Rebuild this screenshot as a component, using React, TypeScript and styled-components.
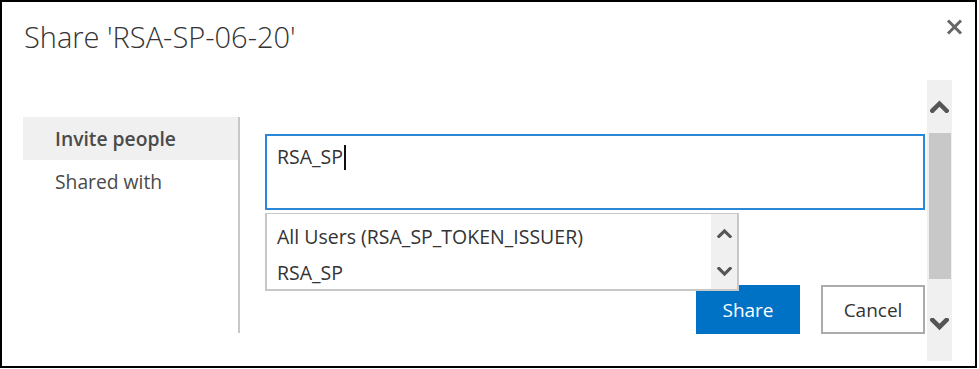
import React from 'react';
import styled, { createGlobalStyle } from 'styled-components';

const GlobalStyle = createGlobalStyle`
  html, body {
    margin: 0;
    padding: 0;
    background: #fff;
  }
  body {
    font-family: 'Open Sans', 'Noto Sans', sans-serif;
    color: #333;
  }
`;

const Chevron = ({ dir, size, stroke }: { dir: 'up' | 'down'; size: number; stroke: number }) => (
  <svg width={size} height={size * 0.66} viewBox="0 0 16 10.5" fill="none">
    <path
      d={dir === 'up' ? 'M2 9 L8 3 L14 9' : 'M2 1.5 L8 7.5 L14 1.5'}
      stroke="#555"
      strokeWidth={stroke}
      strokeLinecap="square"
    />
  </svg>
);

const CloseIcon = () => (
  <svg width="17" height="16" viewBox="0 0 17 16">
    <path d="M2 1.5 L15 14.5 M15 1.5 L2 14.5" stroke="#666" strokeWidth="3" />
  </svg>
);

const App = () => {
  return (
    <>
      <GlobalStyle />
      <Frame>
        <Header>
          <Title>Share 'RSA-SP-06-20'</Title>
          <CloseButton aria-label="Close">
            <CloseIcon />
          </CloseButton>
        </Header>
        <Body>
          <Content>
            <Nav>
              <NavItem active>Invite people</NavItem>
              <NavItem>Shared with</NavItem>
            </Nav>
            <Main>
              <PeopleBox>
                RSA_SP
                <Caret />
              </PeopleBox>
              <Suggestions>
                <SuggestionList>
                  <Suggestion>All Users (RSA_SP_TOKEN_ISSUER)</Suggestion>
                  <Suggestion>RSA_SP</Suggestion>
                </SuggestionList>
                <MiniScroll>
                  <Chevron dir="up" size={15} stroke={3.3} />
                  <Chevron dir="down" size={15} stroke={3.3} />
                </MiniScroll>
              </Suggestions>
              <Actions>
                <Button primary>Share</Button>
                <Button>Cancel</Button>
              </Actions>
            </Main>
          </Content>
          <Scrollbar>
            <ScrollArrow>
              <Chevron dir="up" size={19} stroke={3.8} />
            </ScrollArrow>
            <Thumb />
            <ScrollArrow>
              <Chevron dir="down" size={19} stroke={3.8} />
            </ScrollArrow>
          </Scrollbar>
        </Body>
      </Frame>
    </>
  );
};

export default App;

const Frame = styled.div`
  box-sizing: border-box;
  width: 977px;
  height: 368px;
  border: 2px solid #000;
  display: flex;
  flex-direction: column;
  background: #fff;
`;

const Header = styled.div`
  height: 78px;
  display: flex;
  justify-content: space-between;
  align-items: flex-start;
  padding: 0 12px 0 22px;
`;

const Title = styled.h1`
  margin: 16px 0 0;
  font-size: 29px;
  font-weight: 300;
  line-height: 38px;
  color: #333;
`;

const CloseButton = styled.button`
  margin-top: 17px;
  padding: 0;
  border: 0;
  background: none;
  display: flex;
`;

const Body = styled.div`
  flex: 1;
  display: flex;
  gap: 2px;
  padding-right: 23px;
  padding-bottom: 5px;
`;

const Content = styled.div`
  flex: 1;
  display: flex;
  padding: 37px 0 0 21px;
`;

const Nav = styled.div`
  width: 215px;
  height: 216px;
  border-right: 2px solid #c8c8c8;
`;

const NavItem = styled.div<{ active?: boolean }>`
  height: 43px;
  line-height: 43px;
  padding-left: 32px;
  font-size: 19.3px;
  font-weight: ${(p) => (p.active ? 600 : 400)};
  color: #4a4a4a;
  background: ${(p) => (p.active ? '#f0f0f0' : 'transparent')};
`;

const Main = styled.div`
  position: relative;
  flex: 1;
  padding: 17px 0 0 25px;
`;

const PeopleBox = styled.div`
  box-sizing: border-box;
  height: 76px;
  border: 2px solid #2b88d8;
  padding: 6px 10px;
  font-size: 19.5px;
  line-height: 30px;
  color: #333;
  display: flex;
  align-items: flex-start;
`;

const Caret = styled.span`
  display: inline-block;
  width: 1.5px;
  height: 25px;
  margin: 3px 0 0 1px;
  background: #111;
`;

const Suggestions = styled.div`
  position: absolute;
  top: 96px;
  left: 25px;
  box-sizing: border-box;
  width: 474px;
  height: 78px;
  border: 2px solid #c8c8c8;
  border-top-width: 1px;
  background: #fff;
  display: flex;
  z-index: 2;
`;

const SuggestionList = styled.div`
  flex: 1;
  padding: 5px 0 0 10px;
`;

const Suggestion = styled.div`
  height: 36px;
  line-height: 36px;
  font-size: 19.5px;
  color: #333;
`;

const MiniScroll = styled.div`
  width: 26px;
  background: #f0f0f0;
  display: flex;
  flex-direction: column;
  align-items: center;
  justify-content: space-between;
  padding: 14px 0 12px;
`;

const Actions = styled.div`
  display: flex;
  justify-content: flex-end;
  gap: 21px;
  margin-top: 75px;
`;

const Button = styled.button<{ primary?: boolean }>`
  box-sizing: border-box;
  width: 104px;
  height: 49px;
  font-family: inherit;
  font-size: 19px;
  border: 2px solid ${(p) => (p.primary ? '#0072c6' : '#ababab')};
  background: ${(p) => (p.primary ? '#0072c6' : '#fff')};
  color: ${(p) => (p.primary ? '#fff' : '#333')};
  padding: 0;
`;

const Scrollbar = styled.div`
  width: 25px;
  background: #f0f0f0;
  display: flex;
  flex-direction: column;
  align-items: center;
`;

const ScrollArrow = styled.div`
  height: 53px;
  display: flex;
  align-items: center;
  justify-content: center;
  &:last-child {
    flex: 1;
    align-items: flex-start;
    padding-top: 39px;
  }
`;

const Thumb = styled.div`
  width: 22px;
  height: 146px;
  background: #c8c8c8;
`;
